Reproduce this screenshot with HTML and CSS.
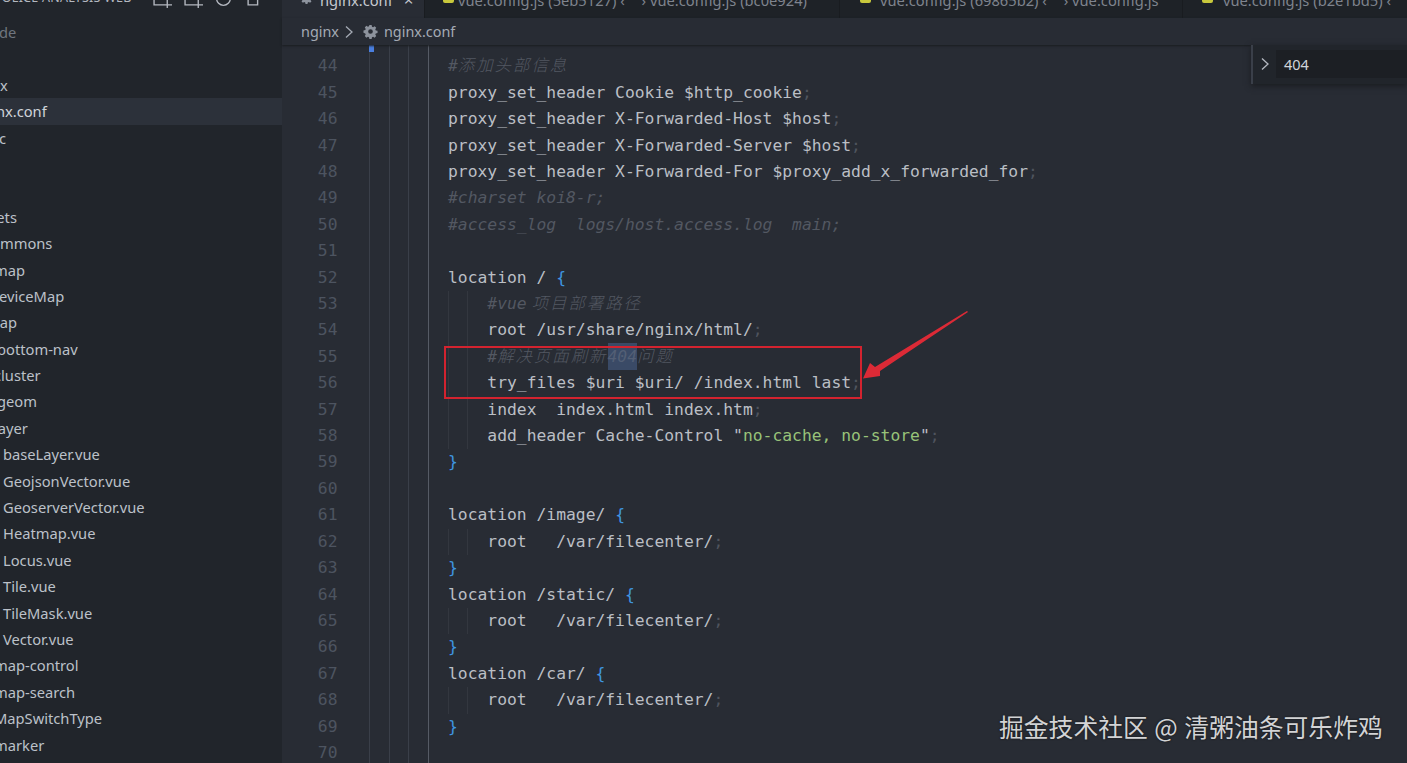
FILE: index.html
```html
<!DOCTYPE html>
<html lang="zh-CN">
<head>
<meta charset="utf-8">
<title>nginx.conf</title>
<link rel="stylesheet" href="styles.css">
</head>
<body>
<div class="app">
  <aside class="side">
    <div class="side-head">
      <span class="side-title">POLICE ANALYSIS WEB</span>
      <div class="side-tools">
        <svg class="tool" viewBox="0 0 18 18"><path d="M1 4v11h8M9 15h9M13.500 9v9M11 9V7"/></svg>
        <svg class="tool" viewBox="0 0 18 18"><path d="M1 4v11h8M9 15h9M13.500 9v9M11 9V7"/></svg>
        <svg class="tool" viewBox="0 0 18 18"><circle cx="8" cy="9" r="6.500"/></svg>
        <svg class="tool" viewBox="0 0 18 18"><path d="M2 4v11h9V4M11 9h3V4"/></svg>
      </div>
    </div>
    <ul class="tree">
      <li class="row dim d-a">node</li>
      <li class="row d-a"></li>
      <li class="row d-z">nginx</li>
      <li class="row sel d-n">nginx.conf</li>
      <li class="row d-c">doc</li>
      <li class="row"></li>
      <li class="row"></li>
      <li class="row d1">assets</li>
      <li class="row d2">commons</li>
      <li class="row d3">map</li>
      <li class="row d4">deviceMap</li>
      <li class="row d5">map</li>
      <li class="row d6">bottom-nav</li>
      <li class="row d7">cluster</li>
      <li class="row d6">geom</li>
      <li class="row d7">layer</li>
      <li class="row file">baseLayer.vue</li>
      <li class="row file">GeojsonVector.vue</li>
      <li class="row file">GeoserverVector.vue</li>
      <li class="row file">Heatmap.vue</li>
      <li class="row file">Locus.vue</li>
      <li class="row file">Tile.vue</li>
      <li class="row file">TileMask.vue</li>
      <li class="row file">Vector.vue</li>
      <li class="row d7">map-control</li>
      <li class="row d7">map-search</li>
      <li class="row d7">MapSwitchType</li>
      <li class="row d7">marker</li>
    </ul>
  </aside>

  <main class="main">
    <div class="tabs">
      <div class="tab active tab-1">
        <svg class="gear" viewBox="0 0 16 16"><use href="#gear"/></svg>
        <span>nginx.conf</span><span class="close">×</span>
      </div>
      <div class="tab tab-2"><i class="js"></i><span>vue.config.js (5eb5127) <span class="arw">‹ ›</span> vue.config.js (bc0e924)</span></div>
      <div class="tab tab-3"><i class="js"></i><span>vue.config.js (69865b2) <span class="arw">‹ ›</span> vue.config.js</span></div>
      <div class="tab tab-4"><i class="js"></i><span>vue.config.js (b2e1bd5) <span class="arw">‹ ›</span></span></div>
    </div>
    <div class="crumbs">
      <span>nginx</span>
      <svg class="chev" viewBox="0 0 10 14"><path d="M2 1.500 8 7l-6 5.500"/></svg>
      <svg class="gear gear-b" viewBox="0 0 16 16"><use href="#gear"/></svg>
      <span>nginx.conf</span>
    </div>
    <div class="editor">
      <div class="marker"></div>
      <div class="line"><span class="ln">44</span><span class="c cm">#<span class="zh">添加头部信息</span></span></div>
      <div class="line"><span class="ln">45</span><span class="c">proxy_set_header Cookie $http_cookie<s>;</s></span></div>
      <div class="line"><span class="ln">46</span><span class="c">proxy_set_header X-Forwarded-Host $host<s>;</s></span></div>
      <div class="line"><span class="ln">47</span><span class="c">proxy_set_header X-Forwarded-Server $host<s>;</s></span></div>
      <div class="line"><span class="ln">48</span><span class="c">proxy_set_header X-Forwarded-For $proxy_add_x_forwarded_for<s>;</s></span></div>
      <div class="line"><span class="ln">49</span><span class="c cm">#charset koi8-r;</span></div>
      <div class="line"><span class="ln">50</span><span class="c cm">#access_log  logs/host.access.log  main;</span></div>
      <div class="line"><span class="ln">51</span><span class="c"></span></div>
      <div class="line"><span class="ln">52</span><span class="c">location / <b>{</b></span></div>
      <div class="line"><span class="ln">53</span><span class="c in cm">    #vue<span class="zh zh-gap">项目部署路径</span></span></div>
      <div class="line"><span class="ln">54</span><span class="c in">    root /usr/share/nginx/html/<s>;</s></span></div>
      <div class="line"><span class="ln">55</span><span class="c in cm">    #<span class="zh">解决页面刷新</span><mark>404</mark><span class="zh">问题</span></span></div>
      <div class="line"><span class="ln">56</span><span class="c in">    try_files $uri $uri/ /index.html last<s>;</s></span></div>
      <div class="line"><span class="ln">57</span><span class="c in">    index  index.html index.htm<s>;</s></span></div>
      <div class="line"><span class="ln">58</span><span class="c in">    add_header Cache-Control <em>"</em><u>no-cache, no-store</u><em>"</em><s>;</s></span></div>
      <div class="line"><span class="ln">59</span><span class="c"><b>}</b></span></div>
      <div class="line"><span class="ln">60</span><span class="c"></span></div>
      <div class="line"><span class="ln">61</span><span class="c">location /image/ <b>{</b></span></div>
      <div class="line"><span class="ln">62</span><span class="c in">    root   /var/filecenter/<s>;</s></span></div>
      <div class="line"><span class="ln">63</span><span class="c"><b>}</b></span></div>
      <div class="line"><span class="ln">64</span><span class="c">location /static/ <b>{</b></span></div>
      <div class="line"><span class="ln">65</span><span class="c in">    root   /var/filecenter/<s>;</s></span></div>
      <div class="line"><span class="ln">66</span><span class="c"><b>}</b></span></div>
      <div class="line"><span class="ln">67</span><span class="c">location /car/ <b>{</b></span></div>
      <div class="line"><span class="ln">68</span><span class="c in">    root   /var/filecenter/<s>;</s></span></div>
      <div class="line"><span class="ln">69</span><span class="c"><b>}</b></span></div>
      <div class="line"><span class="ln">70</span><span class="c"></span></div>
    </div>
    <div class="find">
      <svg class="find-chev" viewBox="0 0 10 14"><path d="M2 1.500 8 7l-6 5.500"/></svg>
      <div class="find-input">404</div>
    </div>
  </main>

  <div class="red-box"></div>
  <svg class="arrow" viewBox="0 0 120 80"><polygon points="106,1 107,2 19,61 19,66 2,68.500 9,53 14,57"/></svg>
  <div class="watermark">掘金技术社区 @ 清粥油条可乐炸鸡</div>
</div>

<svg class="defs" width="0" height="0">
  <symbol id="gear" viewBox="0 0 16 16">
    <path fill-rule="evenodd" d="M6.800 1h2.400l.4 1.900 1.200.5 1.600-1 1.700 1.700-1 1.600.5 1.200 1.900.4v2.400l-1.900.4-.5 1.200 1 1.600-1.700 1.700-1.600-1-1.200.5-.4 1.900H6.800l-.4-1.900-1.200-.5-1.600 1-1.700-1.700 1-1.600-.5-1.200L.5 9.200V6.800l1.900-.4.500-1.200-1-1.600 1.700-1.700 1.600 1 1.200-.5zM8 5.500a2.500 2.500 0 1 0 0 5 2.500 2.500 0 0 0 0-5z"/>
  </symbol>
</svg>
</body>
</html>
```
FILE: styles.css
```css
* { box-sizing: border-box; }
html, body { margin: 0; height: 100%; overflow: hidden; background: #282c34; }

.app {
  position: relative;
  display: flex;
  width: 1407px;
  height: 763px;
  overflow: hidden;
  font-family: "Noto Sans", "Noto Sans CJK SC", sans-serif;
}

/* sidebar */
.side { flex: 0 0 282px; background: #21252b; overflow: hidden; }
.side-head { display: flex; height: 19px; overflow: hidden; position: relative; }
.side-title {
  margin: -11px 0 0 -6px;
  width: 156px;
  font-size: 12.500px;
  line-height: 18px;
  letter-spacing: .25px;
  color: #b4b8c0;
  white-space: nowrap;
}
.side-tools { display: flex; gap: 12px; margin-left: 3px; }
.tool { width: 19px; height: 19px; margin-top: -11px; fill: none; stroke: #b4b8c0; stroke-width: 1.300; }

.tree { list-style: none; margin: 0; padding: 0; }
.row {
  height: 26.400px;
  line-height: 26.400px;
  font-size: 14.700px;
  color: #bcc1c9;
  white-space: nowrap;
}
.dim { color: #6f757f; }
.sel { background: #2c313a; color: #d0d4da; }
.d-a { margin-left: -19px; }
.d-z { margin-left: -31px; }
.d-n { text-indent: -26px; }
.d-c { margin-left: -19px; }
.d1 { margin-left: -26px; }
.d2 { margin-left: -16px; }
.d3 { margin-left: -6px; }
.d4 { margin-left: -10px; }
.d5 { margin-left: -14px; }
.d6 { margin-left: -3px; }
.d7 { margin-left: -6px; }
.file { padding-left: 3px; }

/* main column */
.main { flex: 1; position: relative; min-width: 0; display: flex; flex-direction: column; background: #282c34; }

.tabs { display: flex; height: 18px; flex: none; background: #1e2227; overflow: hidden; }
.tab {
  display: flex;
  align-items: flex-start;
  height: 27px;
  margin-top: -9px;
  font-size: 14.700px;
  line-height: 18px;
  color: #7f848e;
  white-space: nowrap;
  border-right: 1px solid #191c20;
}
.tab-1 { flex: 0 0 143px; padding-left: 18px; background: #282c34; color: #c5c9d0; }
.tab-2 { flex: 0 0 415px; padding-left: 18px; gap: 4px; }
.tab-3 { flex: 0 0 343px; padding-left: 20px; gap: 9px; }
.tab-4 { flex: 1; padding-left: 19px; gap: 10px; border-right: 0; }
.close { margin-left: 11px; font-size: 17px; color: #c5c9d0; }
.js { width: 11px; height: 12px; background: #c8c83c; border-radius: 2px; flex: none; }
.arw { word-spacing: 13px; }
.gear { fill: #8d939d; width: 15px; height: 15px; flex: none; }
.tab-1 .gear { width: 13px; height: 13px; margin: 0 7px 0 0; }

.crumbs {
  display: flex;
  align-items: center;
  height: 27px;
  flex: none;
  padding-left: 19px;
  font-size: 14.400px;
  color: #a4aab4;
  box-shadow: 0 1px 2px #1a1c20;
  position: relative;
  z-index: 1;
}
.chev { width: 10px; height: 14px; margin: 0 6px 0 5px; fill: none; stroke: #a4aab4; stroke-width: 1.300; }
.gear-b { margin: 0 6px 0 3px; }

/* editor */
.editor {
  flex: 1;
  position: relative;
  overflow: hidden;
  padding-top: 8.400px;
  font-family: "DejaVu Sans Mono", "Noto Sans CJK SC", monospace;
  font-size: 16.330px;
  color: #bbbfc5;
  background-image:
    linear-gradient(#3a3f49, #3a3f49),
    linear-gradient(#3a3f49, #3a3f49),
    linear-gradient(#3a3f49, #3a3f49),
    linear-gradient(#565b65, #565b65);
  background-repeat: no-repeat;
  background-size: 1px 100%;
  background-position: 87px 0, 107px 0, 126px 0, 146px 0;
}
.marker { position: absolute; left: 87px; top: 0; width: 5px; height: 7px; background: #4a7fe0; }
.line { display: flex; height: 26.420px; line-height: 26.420px; white-space: pre; }
.ln { width: 55.500px; text-align: right; color: #4d5460; flex: none; }
.c { margin-left: 110.500px; flex: 1; min-width: 0; }
.in {
  background-image: linear-gradient(#33373f, #33373f), linear-gradient(#33373f, #33373f);
  background-repeat: no-repeat;
  background-size: 1px 100%;
  background-position: 0 0, 19px 0;
}
.cm { color: #535862; font-style: italic; }
.zh { font-family: "Noto Sans CJK SC", sans-serif; font-size: 16.400px; letter-spacing: 2px; font-weight: 300; line-height: 1; }
.zh-gap { margin-left: 5px; }
s { text-decoration: none; color: #4f545e; }
b { font-weight: 400; color: #3f96e0; }
em { font-style: normal; color: #bbbfc5; }
u { text-decoration: none; color: #98c379; }
mark { background: #3a4a66; color: #535f75; padding: 4px 0; }

/* find widget */
.find {
  position: absolute;
  top: 45px;
  right: 0;
  width: 156px;
  height: 39px;
  display: flex;
  align-items: center;
  padding-bottom: 2px;
  background: #21252b;
  border-left: 2px solid #3a3f49;
  box-shadow: 0 2px 6px #1a1c20;
  z-index: 2;
}
.find-chev { width: 10px; height: 14px; margin: 0 6px 0 7px; fill: none; stroke: #b4b8c0; stroke-width: 1.300; }
.find-input {
  flex: 1;
  height: 28px;
  line-height: 28px;
  padding-left: 8px;
  background: #1c1f24;
  font-size: 14.500px;
  color: #d0d4da;
}

/* annotations over the screenshot */
.red-box {
  position: absolute;
  left: 444px;
  top: 346px;
  width: 418px;
  height: 53px;
  border: 2px solid #d3232f;
}
.arrow { position: absolute; left: 861px; top: 310px; width: 120px; height: 80px; fill: #dc2a36; }
.watermark {
  position: absolute;
  left: 999px;
  top: 708px;
  font-family: "Noto Sans CJK SC", sans-serif;
  font-size: 24.800px;
  word-spacing: 1px;
  line-height: 36px;
  color: #d2d3d5;
  text-shadow: 0 0 2px #111;
  white-space: nowrap;
}
.defs { position: absolute; }
```
